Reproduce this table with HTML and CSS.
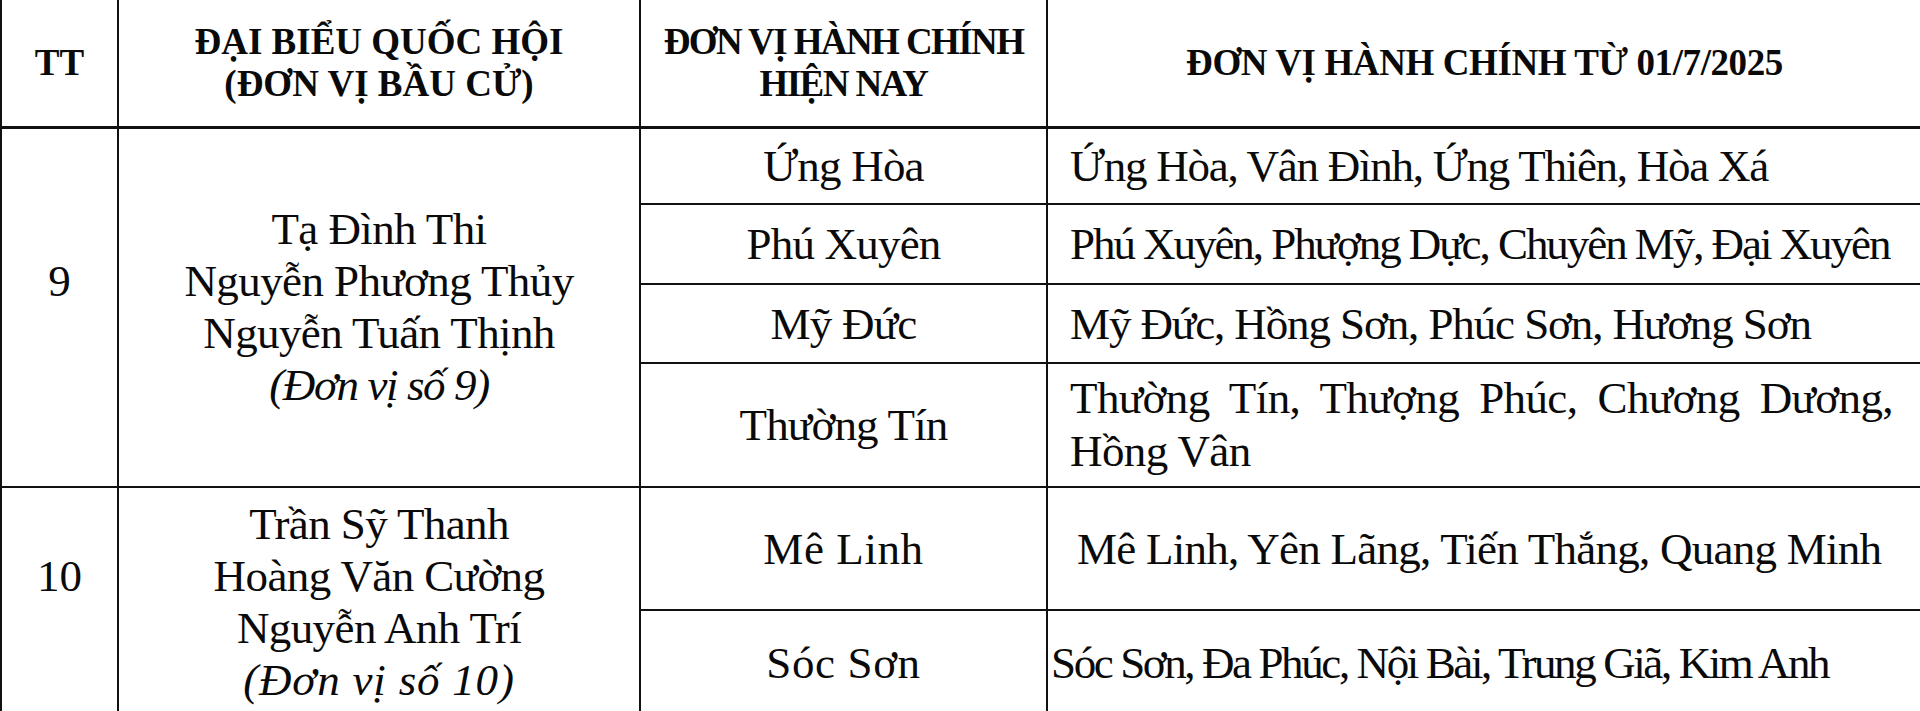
FILE: index.html
```html
<!DOCTYPE html>
<html lang="vi">
<head>
<meta charset="utf-8">
<title>Đơn vị hành chính</title>
<link rel="stylesheet" href="styles.css">
</head>
<body>
<table class="sheet">
  <colgroup>
    <col class="c-tt">
    <col class="c-name">
    <col class="c-now">
    <col class="c-new">
  </colgroup>
  <thead>
    <tr class="r-head">
      <th class="h-tt">TT</th>
      <th class="h-name">ĐẠI BIỂU QUỐC HỘI<br>(ĐƠN VỊ BẦU CỬ)</th>
      <th class="h-now">ĐƠN VỊ HÀNH CHÍNH<br>HIỆN NAY</th>
      <th class="h-new">ĐƠN VỊ HÀNH CHÍNH TỪ 01/7/2025</th>
    </tr>
  </thead>
  <tbody>
    <tr class="r-1">
      <td rowspan="4" class="num">9<br>&nbsp;</td>
      <td rowspan="4" class="names">Tạ Đình Thi<br>Nguyễn Phương Thủy<br>Nguyễn Tuấn Thịnh<br><em class="unit-9">(Đơn vị số 9)</em></td>
      <td class="now">Ứng Hòa</td>
      <td class="new s-1">Ứng Hòa, Vân Đình, Ứng Thiên, Hòa Xá</td>
    </tr>
    <tr class="r-2">
      <td class="now">Phú Xuyên</td>
      <td class="new s-2">Phú Xuyên, Phượng Dực, Chuyên Mỹ, Đại Xuyên</td>
    </tr>
    <tr class="r-3">
      <td class="now">Mỹ Đức</td>
      <td class="new s-3">Mỹ Đức, Hồng Sơn, Phúc Sơn, Hương Sơn</td>
    </tr>
    <tr class="r-4">
      <td class="now">Thường Tín</td>
      <td class="new s-4">Thường Tín, Thượng Phúc, Chương Dương, Hồng Vân</td>
    </tr>
    <tr class="r-5">
      <td rowspan="2" class="num">10<br>&nbsp;</td>
      <td rowspan="2" class="names">Trần Sỹ Thanh<br>Hoàng Văn Cường<br>Nguyễn Anh Trí<br><em class="unit-10">(Đơn vị số 10)</em></td>
      <td class="now wide">Mê Linh</td>
      <td class="new s-5">Mê Linh, Yên Lãng, Tiến Thắng, Quang Minh</td>
    </tr>
    <tr class="r-6">
      <td class="now wide">Sóc Sơn</td>
      <td class="new s-6">Sóc Sơn, Đa Phúc, Nội Bài, Trung Giã, Kim Anh</td>
    </tr>
  </tbody>
</table>
</body>
</html>
```

FILE: styles.css
```css
html, body {
  margin: 0;
  padding: 0;
  background: #fff;
  overflow: hidden;
}
body {
  width: 1920px;
  height: 711px;
  font-family: "Liberation Serif", "Times New Roman", serif;
  color: #0a0a0a;
}
.sheet {
  border-collapse: collapse;
  table-layout: fixed;
  width: 1920px;
}
.c-tt { width: 117px; }
.c-name { width: 522px; }
.c-now { width: 407px; }
.c-new { width: 874px; }

.sheet th,
.sheet td {
  border: 2px solid #111;
  padding: 0;
  vertical-align: middle;
  text-align: center;
}
.sheet tr > :last-child { border-right: none; }
.sheet .r-head th { border-top: none; border-bottom: 3px solid #111; }

.r-head { height: 127px; }
.sheet .r-head th {
  font-weight: bold;
  font-size: 37px;
  line-height: 42px;
}
.sheet .h-now { letter-spacing: -1.6px; }
.sheet .h-new { letter-spacing: -0.4px; }

.r-1 { height: 77px; }
.r-2 { height: 80px; }
.r-3 { height: 79px; }
.r-4 { height: 124px; }
.r-5 { height: 123px; }
.r-6 { height: 106px; }

.sheet .num,
.sheet .names,
.sheet .now,
.sheet .new {
  font-size: 45px;
  line-height: 52px;
}
.sheet .names { letter-spacing: -0.6px; }
.sheet .now { letter-spacing: -0.8px; }
.sheet .now.wide { letter-spacing: 0.6px; }
.names em { font-style: italic; }
.names .unit-9 { letter-spacing: -1.4px; }
.names .unit-10 { letter-spacing: 0.8px; }

.sheet .new {
  text-align: left;
  padding: 0 28px 0 22px;
  white-space: nowrap;
}
.sheet .s-1 { letter-spacing: -1.25px; }
.sheet .s-2 { letter-spacing: -2.05px; padding-right: 14px; }
.sheet .s-3 { letter-spacing: -1.1px; }
.sheet .s-4 {
  white-space: normal;
  letter-spacing: -0.6px;
  text-align: justify;
  text-align-last: left;
  line-height: 53px;
  padding-top: 4px;
  padding-bottom: 4px;
}
.sheet .s-5 { letter-spacing: -0.75px; padding-left: 29px; }
.sheet .s-6 { letter-spacing: -2.4px; padding-left: 3px; }
```
